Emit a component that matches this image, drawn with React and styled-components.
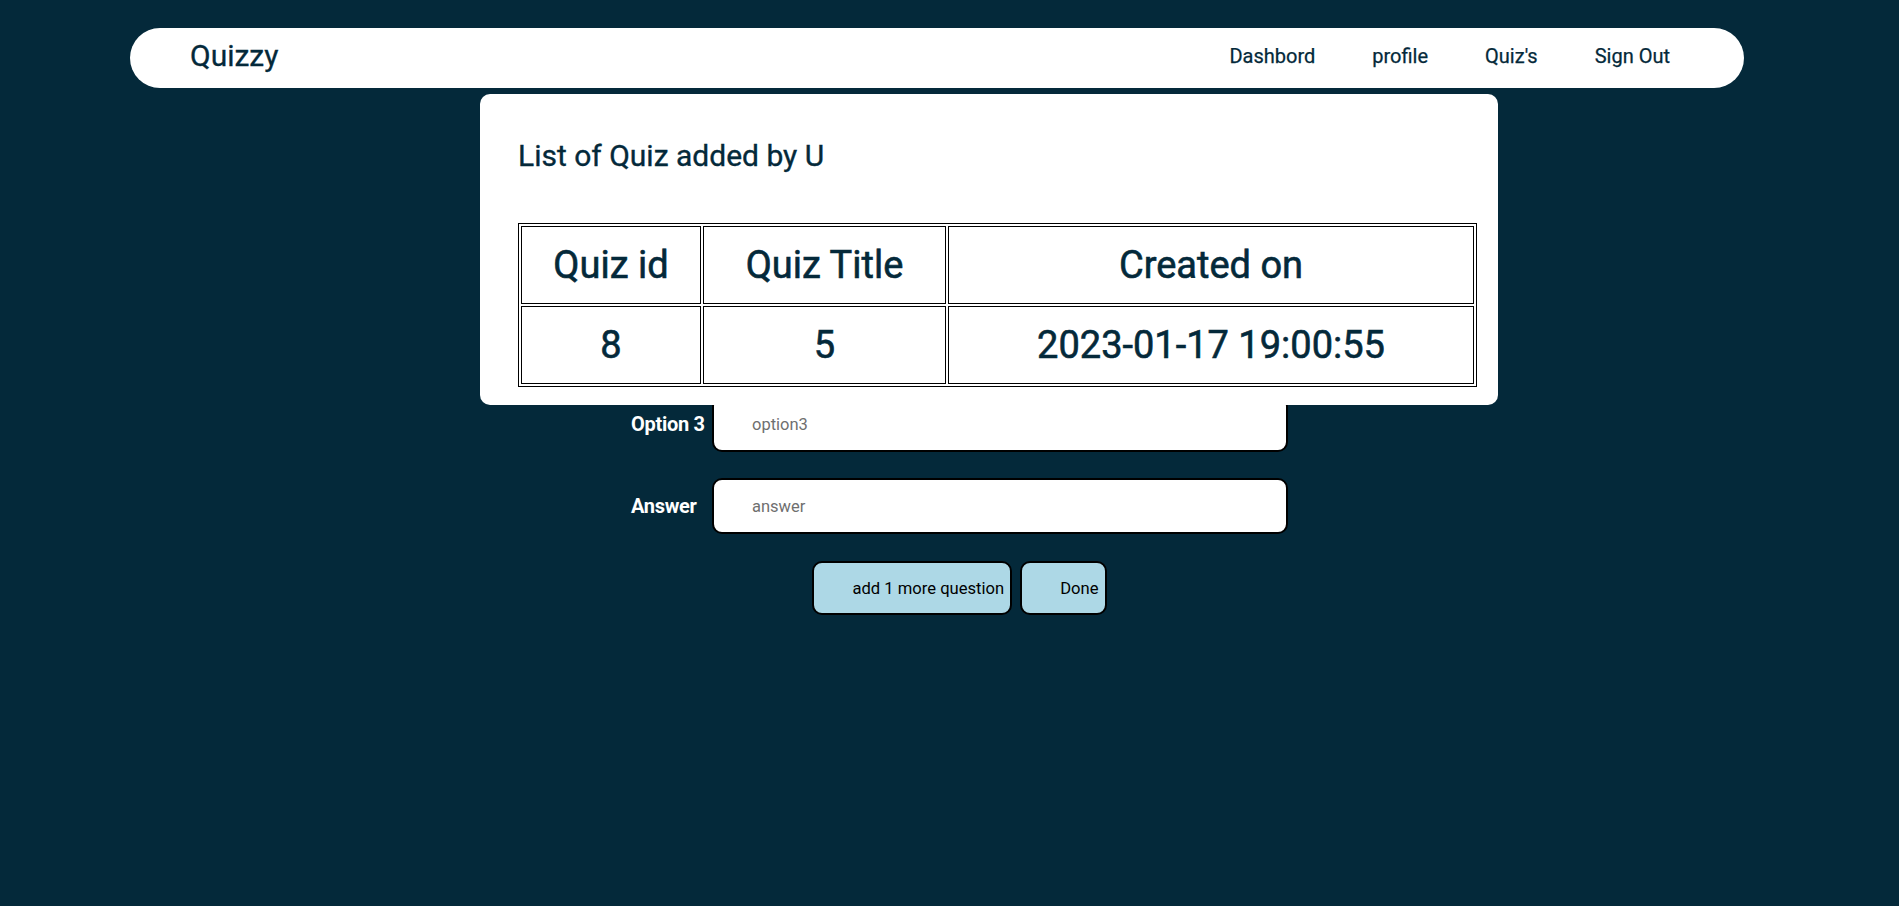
import React from 'react';
import styled, { createGlobalStyle } from 'styled-components';

const GlobalStyle = createGlobalStyle`
  html, body {
    margin: 0;
    padding: 0;
    background-color: #04293a;
    font-family: Roboto, "Liberation Sans", sans-serif;
  }
  #root {
    min-height: 100vh;
  }
`;

const Page = styled.div`
  position: relative;
  min-height: 906px;
  padding-top: 28px;
  box-sizing: border-box;
`;

const Nav = styled.nav`
  display: flex;
  align-items: center;
  justify-content: space-between;
  width: 1614px;
  height: 60px;
  margin-left: 130px;
  padding: 0 74px 5px 60px;
  box-sizing: border-box;
  background-color: #ffffff;
  border-radius: 30px;
`;

const Logo = styled.div`
  font-size: 30px;
  color: #04293a;
  -webkit-text-stroke: 0.3px #04293a;
`;

const NavLinks = styled.div`
  display: flex;
  align-items: center;
  gap: 57px;
`;

const NavLink = styled.a`
  font-size: 20px;
  color: #04293a;
  text-decoration: none;
  cursor: pointer;
  -webkit-text-stroke: 0.25px #04293a;
`;

const Main = styled.main`
  display: flex;
  flex-direction: column;
  align-items: center;
  padding: 62px 0 0 20px;
`;

const Form = styled.form`
  display: grid;
  grid-template-columns: 81px 576px;
  row-gap: 26px;
  align-items: center;
`;

const Label = styled.label`
  font-size: 20px;
  font-weight: 700;
  letter-spacing: -0.3px;
  color: #ffffff;
`;

const Input = styled.input`
  height: 56px;
  box-sizing: border-box;
  padding: 0 12px 0 38px;
  background-color: #ffffff;
  border: 2px solid #000000;
  border-radius: 10px;
  font-family: Roboto, "Liberation Sans", sans-serif;
  font-size: 16.5px;
  color: #000000;
  outline: none;
  &::placeholder {
    color: #6f6f6f;
  }
`;

const Buttons = styled.div`
  display: flex;
  gap: 8px;
  margin-top: 27px;
`;

const Button = styled.button`
  height: 54px;
  padding: 0 6px 0 38px;
  background-color: #add8e6;
  border: 2px solid #000000;
  border-radius: 10px;
  font-family: Roboto, "Liberation Sans", sans-serif;
  font-size: 16.6px;
  color: #000000;
  cursor: pointer;
`;

const Popup = styled.div`
  position: absolute;
  top: 94px;
  left: 480px;
  width: 1018px;
  height: 311px;
  box-sizing: border-box;
  padding: 44px 21px 0 38px;
  background-color: #ffffff;
  border-radius: 10px;
`;

const PopupTitle = styled.h2`
  margin: 0 0 50px 0;
  font-size: 30px;
  font-weight: 400;
  color: #04293a;
  -webkit-text-stroke: 0.35px #04293a;
`;

const Table = styled.table`
  width: 959px;
  table-layout: fixed;
  border: 1px solid #000000;
  border-spacing: 2px;
  color: #04293a;
`;

const Cell = styled.td`
  height: 76px;
  padding: 0;
  border: 1px solid #000000;
  text-align: center;
  font-size: 38px;
  font-weight: 400;
  -webkit-text-stroke: 0.6px #04293a;
`;

const fields = [
  { label: 'Question', name: 'question' },
  { label: 'Option 1', name: 'option1' },
  { label: 'Option 2', name: 'option2' },
  { label: 'Option 3', name: 'option3' },
  { label: 'Answer', name: 'answer' },
];

const quizzes = [{ id: 8, title: 5, created: '2023-01-17 19:00:55' }];

const App = () => {
  return (
    <Page>
      <GlobalStyle />
      <Nav>
        <Logo>Quizzy</Logo>
        <NavLinks>
          <NavLink>Dashbord</NavLink>
          <NavLink>profile</NavLink>
          <NavLink>Quiz's</NavLink>
          <NavLink>Sign Out</NavLink>
        </NavLinks>
      </Nav>
      <Main>
        <Form onSubmit={(e) => e.preventDefault()}>
          {fields.map((f) => (
            <React.Fragment key={f.name}>
              <Label htmlFor={f.name}>{f.label}</Label>
              <Input id={f.name} name={f.name} placeholder={f.name} />
            </React.Fragment>
          ))}
        </Form>
        <Buttons>
          <Button type="button">add 1 more question</Button>
          <Button type="submit">Done</Button>
        </Buttons>
      </Main>
      <Popup>
        <PopupTitle>List of Quiz added by U</PopupTitle>
        <Table>
          <colgroup>
            <col style={{ width: 180 }} />
            <col style={{ width: 243 }} />
            <col />
          </colgroup>
          <thead>
            <tr>
              <Cell as="th">Quiz id</Cell>
              <Cell as="th">Quiz Title</Cell>
              <Cell as="th">Created on</Cell>
            </tr>
          </thead>
          <tbody>
            {quizzes.map((q) => (
              <tr key={q.id}>
                <Cell>{q.id}</Cell>
                <Cell>{q.title}</Cell>
                <Cell>{q.created}</Cell>
              </tr>
            ))}
          </tbody>
        </Table>
      </Popup>
    </Page>
  );
};

export default App;
